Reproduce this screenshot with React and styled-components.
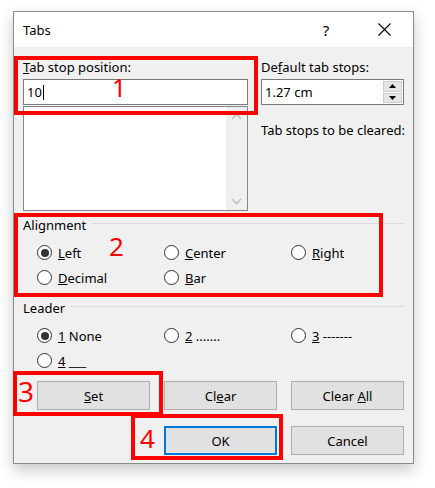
import React from 'react';
import styled, { createGlobalStyle } from 'styled-components';

const GlobalStyle = createGlobalStyle`
  html, body {
    margin: 0;
    padding: 0;
    background: #ffffff;
  }
  body {
    font-family: 'Noto Sans', 'Open Sans', sans-serif;
    font-size: 13px;
    color: #000000;
  }
`;

const Stage = styled.div`
  position: relative;
  width: 435px;
  height: 488px;
  padding: 11px 0 0 13px;
  box-sizing: border-box;
  overflow: hidden;
`;

const Dialog = styled.div`
  width: 401px;
  height: 453px;
  box-sizing: border-box;
  border: 1px solid #8a8a8a;
  background: #f0f0f0;
  box-shadow: 0 6px 14px rgba(0, 0, 0, 0.22);
  display: flex;
  flex-direction: column;
`;

const TitleBar = styled.div`
  height: 35px;
  background: #ffffff;
  display: flex;
  align-items: center;
  padding-left: 9px;
`;

const Title = styled.div`
  flex: 1;
  font-size: 13px;
  line-height: 16px;
`;

const TitleButton = styled.div`
  width: 58px;
  height: 35px;
  display: flex;
  align-items: center;
  justify-content: center;
  font-size: 15px;
`;

const Body = styled.div`
  padding: 12px 9px 0 9px;
  display: flex;
  flex-direction: column;
`;

const TopRow = styled.div`
  display: grid;
  grid-template-columns: 225px 143px;
  column-gap: 13px;
`;

const Column = styled.div`
  display: flex;
  flex-direction: column;
`;

const Label = styled.div`
  line-height: 16px;
  height: 16px;
  margin-bottom: ${p => p.$gap || 0}px;
  margin-top: ${p => p.$top || 0}px;
  white-space: nowrap;
`;

const TextBox = styled.div`
  height: 26px;
  box-sizing: border-box;
  border: 1px solid #7a7a7a;
  background: #ffffff;
  display: flex;
  align-items: center;
  padding-left: 3px;
  line-height: 16px;
`;

const Caret = styled.span`
  display: inline-block;
  width: 1px;
  height: 15px;
  background: #000000;
  margin-left: 1px;
`;

const SpinText = styled.div`
  flex: 1;
`;

const SpinButtons = styled.div`
  width: 19px;
  height: 22px;
  margin-right: 1px;
  display: flex;
  flex-direction: column;
  gap: 1px;
`;

const SpinButton = styled.div`
  flex: 1;
  background: #e5e5e5;
  border: 1px solid #cfcfcf;
  display: flex;
  align-items: center;
  justify-content: center;
`;

const ListBox = styled.div`
  margin-top: 1px;
  height: 105px;
  box-sizing: border-box;
  border: 1px solid #828790;
  background: #ffffff;
  display: flex;
  justify-content: flex-end;
`;

const ScrollTrack = styled.div`
  width: 21px;
  background: #f0f0f0;
  display: flex;
  flex-direction: column;
  align-items: center;
  justify-content: space-between;
  padding: 6px 0 5px;
`;

const GroupHeader = styled.div`
  display: flex;
  align-items: center;
  gap: 5px;
  height: 16px;
  line-height: 16px;
  margin-top: ${p => p.$top}px;
  margin-bottom: 7px;

  &::after {
    content: '';
    flex: 1;
    height: 1px;
    background: #dcdcdc;
    margin-top: -3px;
  }
`;

const OptionGrid = styled.div`
  display: grid;
  grid-template-columns: repeat(3, 113px);
  grid-auto-rows: 25px;
  column-gap: 14px;
  padding-left: 14px;
`;

const Option = styled.div`
  display: flex;
  align-items: center;
  gap: 6px;
  white-space: nowrap;
`;

const RadioCircle = styled.span`
  width: 15px;
  height: 15px;
  box-sizing: border-box;
  border-radius: 50%;
  border: 1px solid #333333;
  background: #ffffff;
  display: flex;
  align-items: center;
  justify-content: center;
  flex: none;

  &::after {
    content: '';
    width: 8px;
    height: 8px;
    border-radius: 50%;
    background: ${p => (p.$checked ? '#333333' : 'transparent')};
  }
`;

const ButtonGrid = styled.div`
  display: grid;
  grid-template-columns: repeat(3, 113px);
  grid-auto-rows: 29px;
  column-gap: 14px;
  row-gap: 16px;
  padding-left: 14px;
  margin-top: 8px;
`;

const Button = styled.div`
  grid-column: ${p => p.$col || 'auto'};
  box-sizing: border-box;
  background: #e1e1e1;
  border: ${p => (p.$default ? '2px solid #0078d7' : '1px solid #adadad')};
  display: flex;
  align-items: center;
  justify-content: center;
  line-height: 16px;
  white-space: pre;
`;

const Mark = styled.div`
  position: absolute;
  left: ${p => p.$x}px;
  top: ${p => p.$y}px;
  width: ${p => p.$w}px;
  height: ${p => p.$h}px;
  box-sizing: border-box;
  border: 4px solid #ff0000;
  pointer-events: none;
`;

const MarkNumber = styled.div`
  position: absolute;
  left: ${p => p.$x}px;
  top: ${p => p.$y}px;
  font-family: 'Noto Sans', sans-serif;
  font-size: ${p => p.$size}px;
  line-height: 0.75;
  color: #ff0000;
`;

const Chevron = ({ up }) => (
  <svg width="11" height="7" viewBox="0 0 11 7">
    <path
      d={up ? 'M1 6 L5.5 1.5 L10 6' : 'M1 1 L5.5 5.5 L10 1'}
      fill="none"
      stroke="#c2c2c2"
      strokeWidth="1.6"
    />
  </svg>
);

const Triangle = ({ up }) => (
  <svg width="7" height="4" viewBox="0 0 7 4">
    <path d={up ? 'M0 4 L3.5 0 L7 4 Z' : 'M0 0 L3.5 4 L7 0 Z'} fill="#000" />
  </svg>
);

const Radio = ({ checked, children }) => (
  <Option>
    <RadioCircle $checked={checked} />
    <span>{children}</span>
  </Option>
);

export default function App() {
  return (
    <Stage>
      <GlobalStyle />
      <Dialog>
        <TitleBar>
          <Title>Tabs</Title>
          <TitleButton>?</TitleButton>
          <TitleButton>
            <svg width="13" height="13" viewBox="0 0 13 13">
              <path d="M0.5 0.5 L12.5 12.5 M12.5 0.5 L0.5 12.5" stroke="#000" strokeWidth="1.1" />
            </svg>
          </TitleButton>
        </TitleBar>
        <Body>
          <TopRow>
            <Column>
              <Label $gap={4}><u>T</u>ab stop position:</Label>
              <TextBox>10<Caret /></TextBox>
              <ListBox>
                <ScrollTrack>
                  <Chevron up />
                  <Chevron />
                </ScrollTrack>
              </ListBox>
            </Column>
            <Column>
              <Label $gap={4}>De<u>f</u>ault tab stops:</Label>
              <TextBox>
                <SpinText>1.27 cm</SpinText>
                <SpinButtons>
                  <SpinButton><Triangle up /></SpinButton>
                  <SpinButton><Triangle /></SpinButton>
                </SpinButtons>
              </TextBox>
              <Label $top={17}>Tab stops to be cleared:</Label>
            </Column>
          </TopRow>

          <GroupHeader $top={6}>Alignment</GroupHeader>
          <OptionGrid>
            <Radio checked><u>L</u>eft</Radio>
            <Radio><u>C</u>enter</Radio>
            <Radio><u>R</u>ight</Radio>
            <Radio><u>D</u>ecimal</Radio>
            <Radio><u>B</u>ar</Radio>
          </OptionGrid>

          <GroupHeader $top={10}>Leader</GroupHeader>
          <OptionGrid>
            <Radio checked><u>1</u> None</Radio>
            <Radio><u>2</u> .......</Radio>
            <Radio><u>3</u> -------</Radio>
            <Radio><u>4</u> ___</Radio>
          </OptionGrid>

          <ButtonGrid>
            <Button><span><u>S</u>et</span></Button>
            <Button><span>Cl<u>e</u>ar</span></Button>
            <Button><span>Clear <u>A</u>ll</span></Button>
            <Button $col={2} $default><span>OK</span></Button>
            <Button><span>Cancel</span></Button>
          </ButtonGrid>
        </Body>
      </Dialog>

      <Mark $x={14} $y={56} $w={244} $h={59} />
      <MarkNumber $x={112} $y={78} $size={25}>1</MarkNumber>
      <Mark $x={14} $y={213} $w={369} $h={84} />
      <MarkNumber $x={109} $y={237} $size={26}>2</MarkNumber>
      <Mark $x={13} $y={371} $w={150} $h={45} />
      <MarkNumber $x={18} $y={381} $size={28}>3</MarkNumber>
      <Mark $x={131} $y={414} $w={152} $h={46} />
      <MarkNumber $x={140} $y={429} $size={26}>4</MarkNumber>
    </Stage>
  );
}
